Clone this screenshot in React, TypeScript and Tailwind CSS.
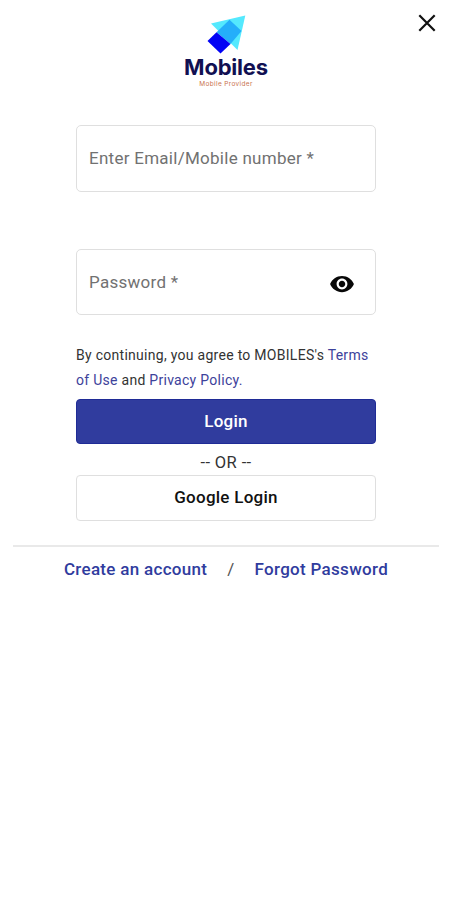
import { useState } from "react"
import type React from "react"

interface TextFieldProps {
  type: string
  label: string
  children?: React.ReactNode
}

const Logo: React.FC = () => (
  <div className="flex flex-col items-center">
    <svg className="h-[40px] w-[40px]" viewBox="206 14 40 40" aria-hidden="true">
      <path d="M245.3 15.5 211 23.5 237.5 50Z" fill="#54e9fe" />
      <path d="M216.5 32.3 229.5 19.8 241.5 31 230.5 44Z" fill="#24aefa" />
      <path d="M216.5 32.3 230.5 44 220.5 53.5 207.5 41Z" fill="#0203f5" />
    </svg>
    <h1 className="font-['Inter'] text-[22px] leading-[26px] font-bold tracking-[-0.2px] text-[#111052]">
      Mobiles
    </h1>
    <p className="font-['Inter'] text-[6.5px] leading-[8px] tracking-[0.36px] text-[#c9734f]">Mobile Provider</p>
  </div>
)

const TextField: React.FC<TextFieldProps> = ({ type, label, children }) => (
  <div className="flex h-full items-center rounded-[5px] border border-[#dfdfdf] px-3">
    <input
      type={type}
      placeholder={label}
      aria-label={label}
      className="mb-px min-w-0 flex-1 text-[17px] leading-6 tracking-[0.27px] outline-none placeholder:text-[#717171]"
    />
    {children}
  </div>
)

const App: React.FC = () => {
  const [showPassword, setShowPassword] = useState<boolean>(false)

  return (
    <main className="relative min-h-screen bg-white pt-[14px] font-['Roboto',sans-serif] text-[#333333]">
      <button type="button" aria-label="Close" className="absolute top-[14px] right-[16px]">
        <svg className="h-[18px] w-[18px]" viewBox="0 0 18 18" fill="none" stroke="#111111" strokeWidth="2.2">
          <path d="M1.3 1.3 16.7 16.7M16.7 1.3 1.3 16.7" />
        </svg>
      </button>
      <Logo />

      {/* Login form */}
      <form className="mx-[76px] mt-[37px] flex flex-col" onSubmit={(e) => e.preventDefault()}>
        <div className="h-[67px]">
          <TextField type="text" label="Enter Email/Mobile number *" />
        </div>
        <div className="mt-[57px] h-[66px]">
          <TextField type={showPassword ? "text" : "password"} label="Password *">
            <button
              type="button"
              aria-label="Toggle password"
              className="mt-[3px] mr-[8px]"
              onClick={() => setShowPassword(!showPassword)}
            >
              <svg className="h-[26px] w-[26px]" viewBox="0 0 24 24" fill="#080808">
                <path d="M12 4.5C7 4.5 2.73 7.61 1 12c1.73 4.39 6 7.5 11 7.5s9.27-3.11 11-7.5c-1.73-4.39-6-7.5-11-7.5zM12 17c-2.76 0-5-2.24-5-5s2.24-5 5-5 5 2.24 5 5-2.24 5-5 5zm0-8c-1.66 0-3 1.34-3 3s1.34 3 3 3 3-1.34 3-3-1.34-3-3-3z" />
              </svg>
            </button>
          </TextField>
        </div>
        <p className="mt-[28px] text-[14px] leading-[25px] tracking-[0.28px] whitespace-nowrap">
          By continuing, you agree to MOBILES's <a className="text-[#3d429b]">Terms</a>
          <br />
          <a className="text-[#3d429b]">of Use</a> and <a className="text-[#3d429b]">Privacy Policy.</a>
        </p>
        <button
          type="submit"
          className="mt-[6px] h-[45px] rounded-[4px] border border-[#1f2b96] bg-[#303c9e] text-[17px] font-medium tracking-[0.25px] text-white"
        >
          Login
        </button>
        <div className="h-[31px] pt-[7px] text-center text-[16.5px] leading-6 tracking-[0.4px]">-- OR --</div>
        <button
          type="button"
          className="h-[46px] rounded-[4px] border border-[#dfdfdf] text-[17px] font-medium tracking-[0.25px] text-[#111111]"
        >
          Google Login
        </button>
      </form>

      <hr className="mx-[13px] mt-[24px] border-t-2 border-[#e9e9e9]" />
      <nav className="mt-[10px] flex justify-center text-[17px] leading-6 font-medium tracking-[0.3px] text-[#303c9e]">
        <a>Create an account</a>
        <span className="mx-[20px] font-normal text-[#555555]">/</span>
        <a>Forgot Password</a>
      </nav>
    </main>
  )
}

export default App
